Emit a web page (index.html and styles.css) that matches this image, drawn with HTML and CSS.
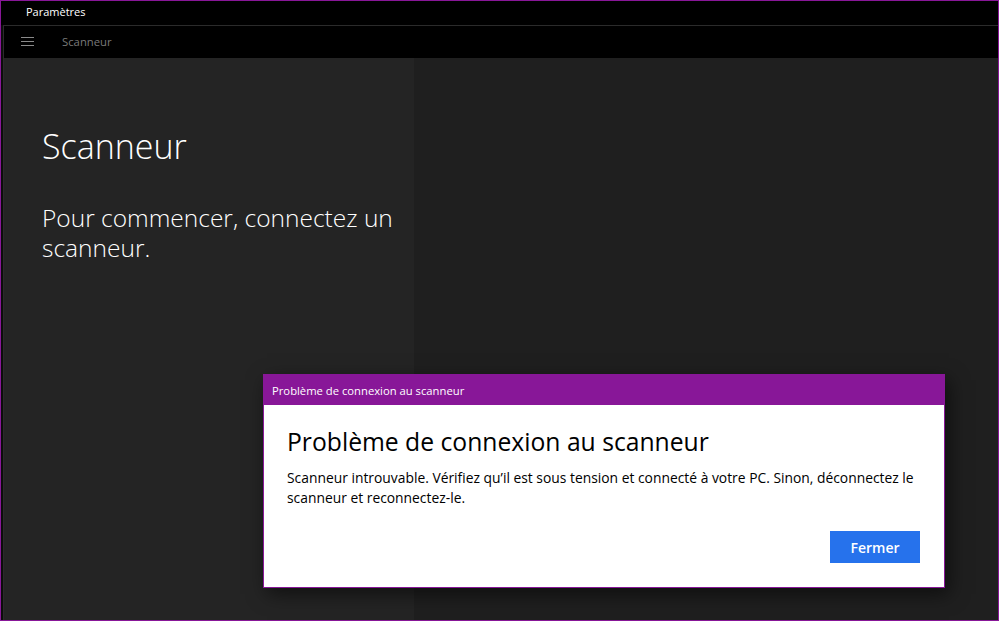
FILE: index.html
```html
<!DOCTYPE html>
<html lang="fr">
<head>
<meta charset="utf-8">
<title>Paramètres</title>
<link rel="stylesheet" href="styles.css">
</head>
<body>
<div class="window">
  <div class="titlebar"><span class="app-title">Paramètres</span></div>
  <div class="frame">
    <div class="edge"></div>
    <div class="inner">
      <div class="navbar">
        <svg class="hamburger" width="13" height="10" viewBox="0 0 13 10"><path d="M0 0.5H13M0 4.5H13M0 8.5H13" stroke="#8a8a8a" stroke-width="1"/></svg>
        <span class="nav-title">Scanneur</span>
      </div>
      <div class="content">
        <div class="left-pane">
          <h1 class="page-title">Scanneur</h1>
          <p class="page-sub">Pour commencer, connectez un scanneur.</p>
        </div>
        <div class="right-pane"></div>
      </div>
    </div>
  </div>
  <div class="dialog">
    <div class="dialog-bar">Problème de connexion au scanneur</div>
    <div class="dialog-body">
      <h2 class="dialog-title">Problème de connexion au scanneur</h2>
      <p class="dialog-text">Scanneur introuvable. Vérifiez qu’il est sous tension et connecté à votre PC. Sinon, déconnectez le scanneur et reconnectez-le.</p>
      <div class="dialog-actions"><button class="btn">Fermer</button></div>
    </div>
  </div>
</div>
</body>
</html>
```

FILE: styles.css
```css
html, body {
  margin: 0;
  padding: 0;
  background: #000;
}
body {
  width: 999px;
  height: 621px;
  overflow: hidden;
  font-family: "Open Sans", "Noto Sans", sans-serif;
}
.window {
  position: relative;
  box-sizing: border-box;
  width: 999px;
  height: 621px;
  border: 1px solid #881798;
  background: #000;
  display: flex;
  flex-direction: column;
}
.titlebar {
  height: 24px;
  box-sizing: border-box;
  display: flex;
  align-items: flex-start;
  padding: 4px 0 0 25px;
  flex: none;
}
.app-title {
  color: #fff;
  font-size: 11px;
  line-height: 13px;
}
.frame {
  flex: 1;
  display: flex;
  min-height: 0;
}
.edge {
  width: 2px;
  background: #0c0c0c;
  flex: none;
}
.inner {
  flex: 1;
  display: flex;
  flex-direction: column;
  border-top: 1px solid #2b2b2b;
  border-left: 1px solid #2b2b2b;
}
.navbar {
  height: 32px;
  box-sizing: border-box;
  flex: none;
  display: flex;
  align-items: center;
  background: #000;
  padding: 0 0 1px 17px;
}
.hamburger {
  display: block;
  margin-top: 1px;
}
.nav-title {
  margin-left: 28px;
  color: #7a7a7a;
  font-size: 11.3px;
}
.content {
  flex: 1;
  display: flex;
}
.left-pane {
  width: 410px;
  background: #242424;
  padding: 65px 0 0 38px;
  box-sizing: border-box;
}
.right-pane {
  flex: 1;
  background: #1f1f1f;
}
.page-title {
  margin: 0;
  color: #fff;
  font-weight: 300;
  font-size: 34px;
  line-height: 46px;
}
.page-sub {
  margin: 34px 0 0;
  color: #fff;
  font-weight: 300;
  font-size: 24.5px;
  line-height: 30px;
  width: 370px;
}
.dialog {
  position: absolute;
  left: 262px;
  top: 373px;
  width: 682px;
  height: 214px;
  box-sizing: border-box;
  border: 1px solid #881798;
  background: #fff;
  box-shadow: 4px 6px 18px rgba(0, 0, 0, 0.55);
  display: flex;
  flex-direction: column;
}
.dialog-bar {
  height: 30px;
  flex: none;
  background: #881798;
  color: #fff;
  font-size: 11.25px;
  display: flex;
  align-items: center;
  padding-left: 8px;
}
.dialog-body {
  flex: 1;
  padding: 22px 24px 0 23px;
  display: flex;
  flex-direction: column;
}
.dialog-title {
  margin: 0;
  font-weight: 400;
  font-size: 24.7px;
  line-height: 30px;
  color: #000;
}
.dialog-text {
  margin: 11px 0 0;
  font-size: 13.85px;
  line-height: 20px;
  color: #000;
}
.dialog-actions {
  display: flex;
  justify-content: flex-end;
  margin-top: 23px;
}
.btn {
  width: 90px;
  height: 32px;
  border: none;
  background: #2672ec;
  color: #fff;
  font-family: inherit;
  font-size: 14px;
  font-weight: 600;
  margin-right: 0;
}
```
